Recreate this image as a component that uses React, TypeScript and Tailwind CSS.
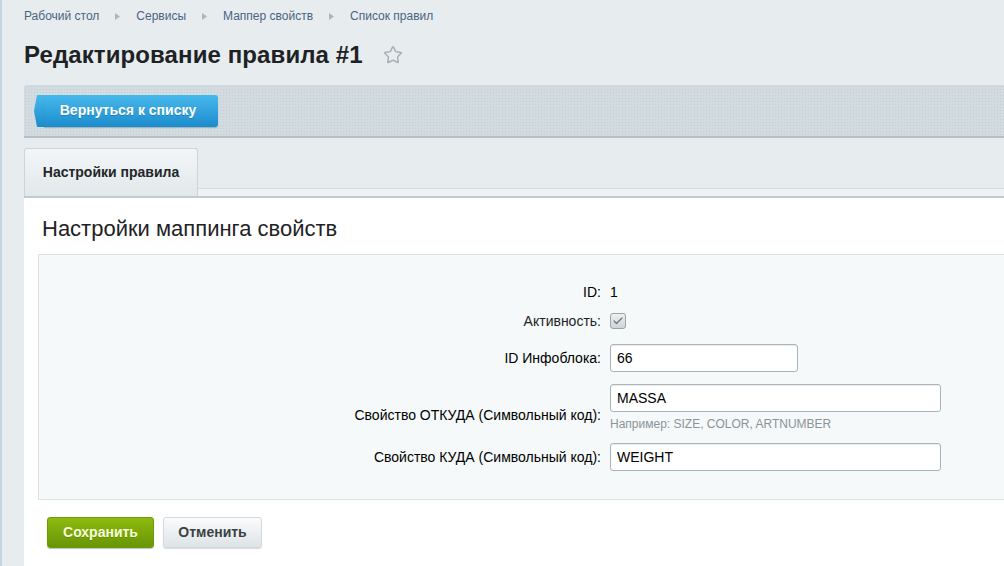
import { Check, Star } from "lucide-react";

const CRUMBS = ["Рабочий стол", "Сервисы", "Маппер свойств", "Список правил"];

function Crumbs() {
  return (
    <div className="flex items-center h-[32px] text-[12px] text-[#4a6480]">
      {CRUMBS.map((c, i) => (
        <div key={c} className="flex items-center">
          {i > 0 && (
            <svg width="5" height="7" viewBox="0 0 5 7" className="mx-[16px]">
              <path d="M0 0 L5 3.5 L0 7 Z" fill="#aab7c0" />
            </svg>
          )}
          <span>{c}</span>
        </div>
      ))}
    </div>
  );
}

function Field({ value, width }: { value: string; width: string }) {
  return (
    <div
      className={`${width} h-[28px] flex items-center px-[6px] bg-white border border-[#a9b5bc] rounded-[3px] shadow-[inset_0_1px_1px_rgba(0,0,0,0.08)] text-[14px] text-black`}
    >
      {value}
    </div>
  );
}

export default function App() {
  return (
    <div
      className="min-h-[566px] bg-[#e7edef] border-l-2 border-[#c5d4de] pl-[22px] overflow-hidden"
      style={{ fontFamily: '"Liberation Sans", Arial, sans-serif' }}
    >
      <Crumbs />
      <div className="flex items-center h-[48px] pb-[2px]">
        <h1 className="text-[24px] font-bold text-[#1f2225] tracking-[0.1px]">
          Редактирование правила #1
        </h1>
        <Star className="ml-[20px] w-[20px] h-[20px] text-[#a9b1b6]" strokeWidth={1.8} />
      </div>

      <div className="mt-[5px] h-[53px] flex items-center pl-[10px] rounded-tl-[3px] bg-[#d2dbdf] border-b-2 border-[#b6c1c6] bg-[radial-gradient(#c4ced3_0.6px,transparent_0.8px)] [background-size:3px_3px]">
        <div className="relative flex items-center h-[32px]">
          <svg width="10" height="32" viewBox="0 0 10 32" className="shrink-0">
            <defs>
              <linearGradient id="bl" x1="0" y1="0" x2="0" y2="1">
                <stop offset="0" stopColor="#46b9ec" />
                <stop offset="1" stopColor="#1a8ccd" />
              </linearGradient>
            </defs>
            <path d="M10 0 L3 0 L0 16 L3 32 L10 32 Z" fill="url(#bl)" />
          </svg>
          <div className="h-[32px] w-[174px] flex items-center justify-center pr-[6px] rounded-r-[3px] bg-gradient-to-b from-[#46b9ec] to-[#1a8ccd] shadow-[0_1px_1px_rgba(0,0,0,0.2)] text-white text-[14px] font-bold [text-shadow:0_1px_0_rgba(0,0,0,0.2)]">
            Вернуться к списку
          </div>
        </div>
      </div>

      <div className="mt-[12px] flex items-end h-[48px] border-b-2 border-[#c3cbcf]">
        <div className="h-[48px] w-[174px] flex items-center justify-center rounded-t-[3px] border border-b-0 border-[#cdd5d9] bg-gradient-to-b from-[#f3f6f7] to-[#e1e8eb] text-[14px] font-bold text-[#232628]">
          Настройки правила
        </div>
        <div className="flex-1 h-[8px] bg-[#eef2f3] border-t border-[#d5dcdf]" />
      </div>

      <div className="bg-white pl-[14px] pb-[20px]">
        <h2 className="h-[56px] pt-[14px] pl-[4px] text-[22px] text-[#1f2225]">
          Настройки маппинга свойств
        </h2>
        <div className="bg-[#f5f9f9] border border-r-0 border-[#dbe2e5] pt-[25px] pb-[21px]">
          <div className="grid grid-cols-[562px_1fr] gap-x-[9px] items-center text-[14px] text-black">
            <div className="text-right h-[24px] leading-[24px]">ID:</div>
            <div className="h-[24px] leading-[24px]">1</div>

            <div className="text-right h-[34px] leading-[34px] text-[#1f2225]">Активность:</div>
            <div className="h-[34px] flex items-center">
              <div className="w-[16px] h-[16px] rounded-[3px] border border-[#9aa3a8] bg-gradient-to-b from-[#eef0f1] to-[#cfd4d7] flex items-center justify-center">
                <Check className="w-[12px] h-[12px] text-[#6d767b]" strokeWidth={2.5} />
              </div>
            </div>

            <div className="text-right h-[40px] leading-[40px]">ID Инфоблока:</div>
            <div className="h-[40px] flex items-center">
              <Field value="66" width="w-[188px]" />
            </div>

            <div className="text-right pt-[16px]">Свойство ОТКУДА (Символьный код):</div>
            <div className="pt-[6px] pb-[3px]">
              <Field value="MASSA" width="w-[331px]" />
              <div className="mt-[3px] text-[12px] text-[#8a9499]">Например: SIZE, COLOR, ARTNUMBER</div>
            </div>

            <div className="text-right h-[42px] leading-[42px]">Свойство КУДА (Символьный код):</div>
            <div className="h-[42px] flex items-center">
              <Field value="WEIGHT" width="w-[331px]" />
            </div>
          </div>
        </div>

        <div className="flex gap-[9px] mt-[17px] ml-[9px]">
          <div className="h-[31px] w-[107px] flex items-center justify-center rounded-[3px] bg-gradient-to-b from-[#8fba0e] to-[#689606] border border-[#6b9a08] shadow-[0_1px_1px_rgba(0,0,0,0.25)] text-[#f8ffd8] text-[14px] font-bold [text-shadow:0_1px_0_rgba(0,0,0,0.15)]">
            Сохранить
          </div>
          <div className="h-[31px] w-[99px] flex items-center justify-center rounded-[3px] bg-gradient-to-b from-[#fbfcfc] to-[#dde3e6] border border-[#d3d9dc] shadow-[0_1px_1px_rgba(0,0,0,0.15)] text-[#3a4145] text-[14px] font-bold">
            Отменить
          </div>
        </div>
      </div>
    </div>
  );
}
